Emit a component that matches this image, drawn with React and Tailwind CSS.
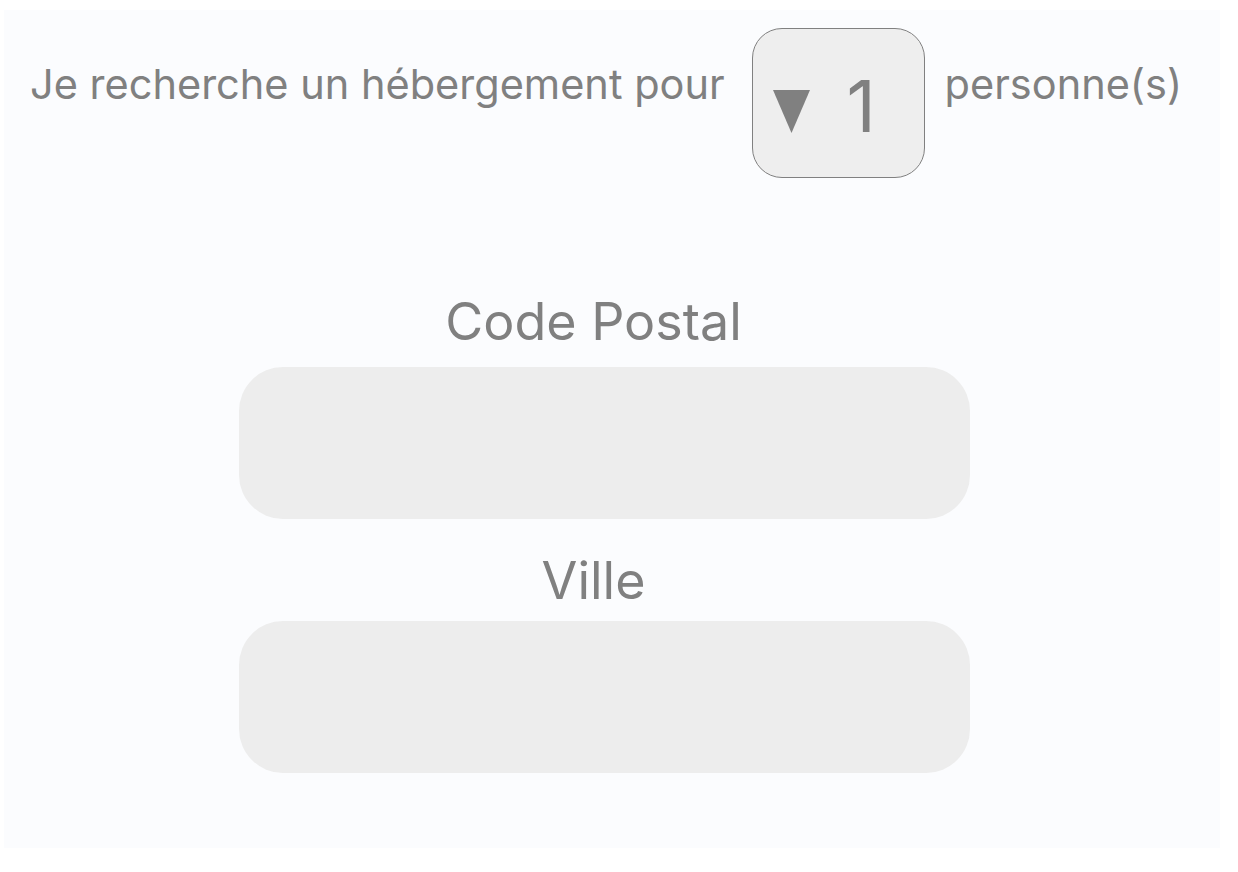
import React from "react";

const Field = ({ label, gap, className = "" }) => (
  <div className={`flex flex-col items-center ${className}`}>
    <label className="pr-[22px] text-[52px] leading-none text-[#808080]">{label}</label>
    <input
      type="text"
      className={`${gap} w-[731px] h-[152px] rounded-[44px] bg-[#ededed] outline-none border-0`}
    />
  </div>
);

export default function App() {
  return (
    <div className="min-h-screen bg-white pt-[10px] pl-[4px] font-['Inter',sans-serif]">
      <div className="w-[1216px] h-[838px] bg-[#fbfcfe] pt-[18px]">
        {/* Nombre de personnes */}
        <div className="flex items-start pl-[26px] text-[41.5px] leading-none text-[#808080]">
          <span className="mt-[36px]">Je recherche un hébergement pour</span>
          <button className="ml-[27px] w-[173px] h-[150px] shrink-0 rounded-[30px] border border-[#808080] bg-[#eeeeee] flex items-start pl-[20px] text-[72px] leading-none">
            <svg width="37" height="43" viewBox="0 0 37 43" className="mt-[61px] shrink-0">
              <polygon points="0,0 37,0 18.5,43" fill="#808080" />
            </svg>
            <span className="mt-[41px] ml-[37px]">1</span>
          </button>
          <span className="mt-[36px] ml-[20px]">personne(s)</span>
        </div>

        {/* Adresse */}
        <div className="mt-[118px] flex flex-col pl-[235px] w-[966px]">
          <Field label="Code Postal" gap="mt-[19px]" />
          <Field label="Ville" gap="mt-[14px]" className="mt-[36px]" />
        </div>
      </div>
    </div>
  );
}
